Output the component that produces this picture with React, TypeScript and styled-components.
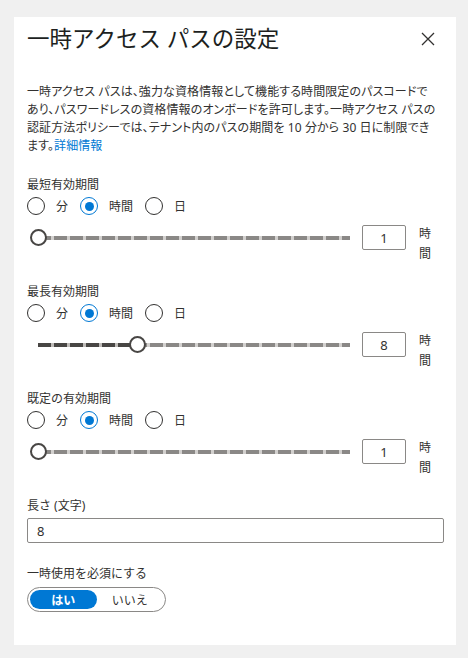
import styled, { createGlobalStyle } from "styled-components";

const GlobalStyle = createGlobalStyle`
  html, body {
    margin: 0;
    padding: 0;
    background: #f0f0f0;
  }
  body {
    font-family: "Noto Sans", "Noto Sans CJK JP", sans-serif;
    color: #323130;
  }
`;

type Section = {
  label: string;
  unit: string;
  value: number;
};

const sections: Section[] = [
  { label: "最短有効期間", unit: "時間", value: 1 },
  { label: "最長有効期間", unit: "時間", value: 8 },
  { label: "既定の有効期間", unit: "時間", value: 1 },
];

const MIN = 1;
const MAX = 23;

const Radio = ({ label, checked }: { label: string; checked?: boolean }) => (
  <RadioItem>
    <Circle $checked={checked} />
    <span>{label}</span>
  </RadioItem>
);

const Slider = ({ value }: { value: number }) => {
  const pct = ((value - MIN) / (MAX - MIN)) * 100;
  return (
    <SliderBox>
      <Track>
        <Filled style={{ width: `${pct}%` }} />
        <Thumb style={{ left: `${pct}%` }} />
      </Track>
    </SliderBox>
  );
};

const App = () => {
  return (
    <>
      <GlobalStyle />
      <Panel>
        <Header>
          <Title>一時アクセス パスの設定</Title>
          <Close aria-label="close">
            <svg width="14" height="14" viewBox="0 0 14 14">
              <path d="M1 1L13 13M13 1L1 13" stroke="#323130" strokeWidth="1.3" />
            </svg>
          </Close>
        </Header>

        <Description>
          <Line>一時アクセス パスは、強力な資格情報として機能する時間限定のパスコードで</Line>
          <Line>あり、パスワードレスの資格情報のオンボードを許可します。一時アクセス パスの</Line>
          <Line>認証方法ポリシーでは、テナント内のパスの期間を 10 分から 30 日に制限でき</Line>
          <Line>
            ます。<Link href="#">詳細情報</Link>
          </Line>
        </Description>

        {sections.map((s) => (
          <Group key={s.label}>
            <Label>{s.label}</Label>
            <RadioRow>
              <Radio label="分" />
              <Radio label="時間" checked />
              <Radio label="日" />
            </RadioRow>
            <SliderRow>
              <Slider value={s.value} />
              <NumBox>{s.value}</NumBox>
              <Unit>
                {s.unit.split("").map((c, i) => (
                  <span key={i}>{c}</span>
                ))}
              </Unit>
            </SliderRow>
          </Group>
        ))}

        <Label>長さ (文字)</Label>
        <TextField>8</TextField>

        <Label $top={22}>一時使用を必須にする</Label>
        <Toggle>
          <ToggleOption $active>はい</ToggleOption>
          <ToggleOption>いいえ</ToggleOption>
        </Toggle>
      </Panel>
    </>
  );
};

export default App;

const Panel = styled.div`
  width: 416px;
  margin: 17px 0 0 14px;
  padding: 7px 13px 33px 13px;
  background: #ffffff;
`;

const Header = styled.div`
  display: flex;
  align-items: center;
  justify-content: space-between;
  height: 30px;
`;

const Title = styled.h1`
  margin: 0;
  font-size: 22.5px;
  font-weight: 400;
  line-height: 30px;
  color: #201f1e;
`;

const Close = styled.div`
  width: 14px;
  height: 14px;
  margin-right: 8px;
  display: flex;
`;

const Description = styled.div`
  margin: 29px 0 21px 0;
  font-size: 12px;
  line-height: 18px;
`;

const Line = styled.div`
  white-space: nowrap;
  font-feature-settings: "palt";
  letter-spacing: 0.1px;
`;

const Link = styled.a`
  color: #0078d4;
  text-decoration: none;
`;

const Group = styled.div`
  margin-bottom: 18px;
`;

const Label = styled.div<{ $top?: number }>`
  font-size: 12px;
  line-height: 18px;
  margin-top: ${(p) => p.$top ?? 0}px;
`;

const RadioRow = styled.div`
  display: flex;
  align-items: center;
  gap: 12px;
  margin-top: 3px;
  height: 18px;
`;

const RadioItem = styled.label`
  display: flex;
  align-items: center;
  gap: 11px;
  font-size: 12px;
`;

const Circle = styled.span<{ $checked?: boolean }>`
  box-sizing: border-box;
  width: 18px;
  height: 18px;
  border-radius: 50%;
  border: 1.5px solid ${(p) => (p.$checked ? "#0078d4" : "#323130")};
  display: flex;
  align-items: center;
  justify-content: center;
  &::after {
    content: "";
    display: ${(p) => (p.$checked ? "block" : "none")};
    width: 9px;
    height: 9px;
    border-radius: 50%;
    background: #0078d4;
  }
`;

const SliderRow = styled.div`
  display: flex;
  align-items: flex-start;
  margin-top: 10px;
  height: 40px;
`;

const SliderBox = styled.div`
  flex: 1;
  height: 25px;
  display: flex;
  align-items: center;
  padding-left: 11px;
`;

const Track = styled.div`
  position: relative;
  flex: 1;
  height: 4px;
  background: repeating-linear-gradient(
    to right,
    #8a8886 0,
    #8a8886 13px,
    #d2d0ce 13px,
    #d2d0ce 16px
  );
`;

const Filled = styled.div`
  position: absolute;
  left: 0;
  top: 0;
  height: 4px;
  background: repeating-linear-gradient(
    to right,
    #484644 0,
    #484644 13px,
    #bebbb8 13px,
    #bebbb8 16px
  );
`;

const Thumb = styled.div`
  position: absolute;
  top: 50%;
  box-sizing: border-box;
  width: 17px;
  height: 17px;
  margin: -8.5px 0 0 -8.5px;
  border-radius: 50%;
  background: #ffffff;
  border: 2px solid #484644;
`;

const NumBox = styled.div`
  box-sizing: border-box;
  width: 44px;
  height: 25px;
  margin-left: 12px;
  border: 1px solid #8a8886;
  border-radius: 2px;
  display: flex;
  align-items: center;
  justify-content: center;
  font-size: 13px;
`;

const Unit = styled.div`
  display: flex;
  flex-direction: column;
  margin: -1px 10px 0 13px;
  width: 14px;
  font-size: 12px;
  line-height: 20px;
`;

const TextField = styled.div`
  box-sizing: border-box;
  margin-top: 3px;
  width: 417px;
  height: 25px;
  border: 1px solid #8a8886;
  border-radius: 2px;
  padding-left: 9px;
  display: flex;
  align-items: center;
  font-size: 13px;
`;

const Toggle = styled.div`
  box-sizing: border-box;
  margin-top: 4px;
  width: 139px;
  height: 25px;
  padding: 2px;
  border: 1px solid #8a8886;
  border-radius: 13px;
  display: flex;
  align-items: stretch;
`;

const ToggleOption = styled.div<{ $active?: boolean }>`
  flex: 1;
  display: flex;
  align-items: center;
  justify-content: center;
  border-radius: 10px;
  font-size: 12px;
  font-weight: ${(p) => (p.$active ? 700 : 400)};
  color: ${(p) => (p.$active ? "#ffffff" : "#323130")};
  background: ${(p) => (p.$active ? "#0078d4" : "transparent")};
`;
